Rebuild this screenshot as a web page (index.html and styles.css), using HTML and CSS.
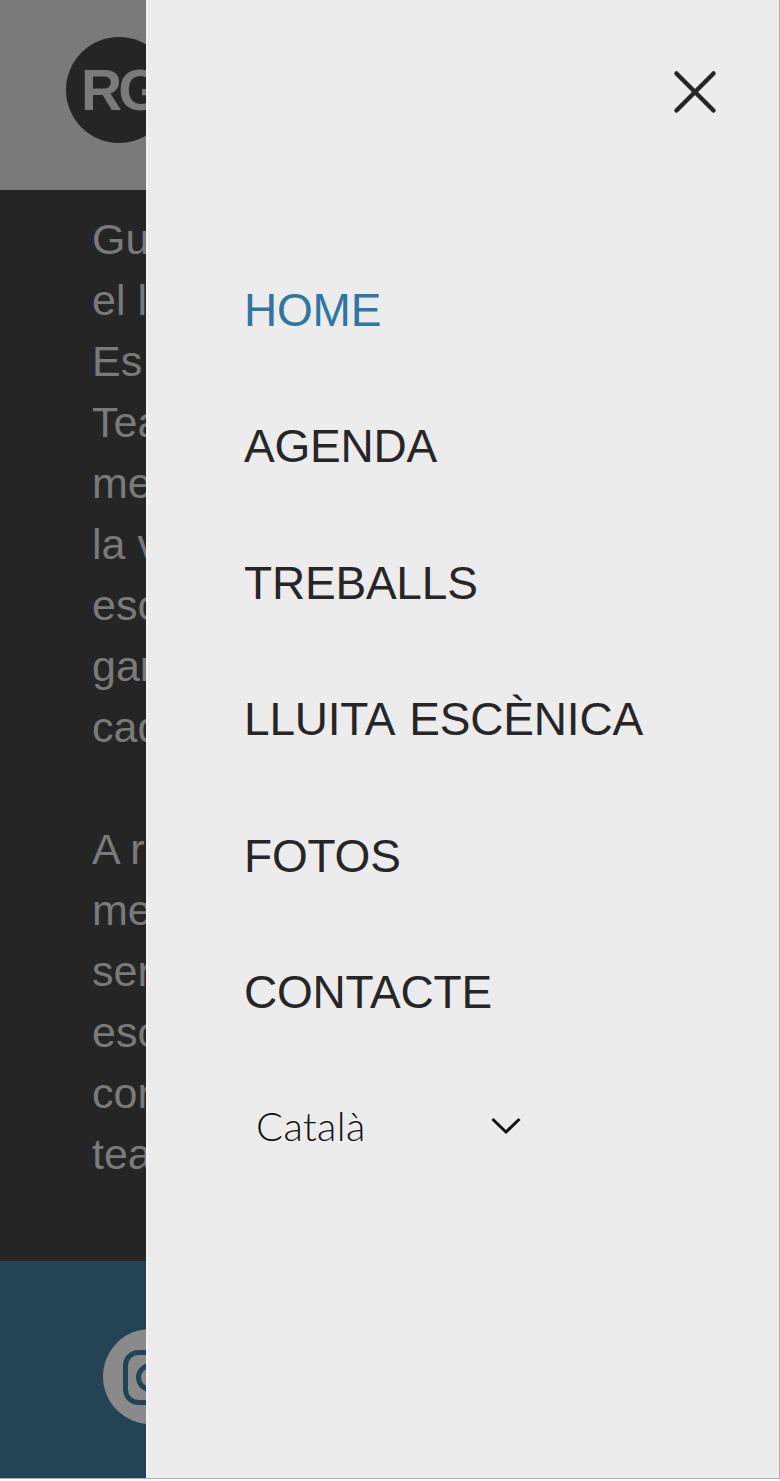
FILE: index.html
```html
<!DOCTYPE html>
<html lang="ca">
<head>
    <meta charset="UTF-8">
    <meta name="viewport" content="width=device-width, initial-scale=1.0">
    <title>Menu</title>
    <link rel="stylesheet" href="styles.css">
</head>
<body>

    <div class="page">
        <header class="top">
            <div class="logo">RG</div>
        </header>

        <main class="about">
            <p class="about-text">
                Gu<br>el l<br>Es<br>Tea<br>me<br>la v<br>esc<br>gar<br>cad
            </p>
            <p class="about-text">
                A r<br>me<br>ser<br>esc<br>cor<br>tea
            </p>
        </main>

        <footer class="bottom">
            <a class="social" href="#">
                <svg viewBox="0 0 95 95" width="95" height="95" fill="none" stroke="#234455" stroke-width="5">
                    <rect x="22.5" y="23.5" width="50" height="50" rx="13"/>
                    <circle cx="47.5" cy="48.5" r="12"/>
                </svg>
            </a>
        </footer>
        <div class="page-edge"></div>

        <aside class="panel">
            <div class="panel-head">
                <svg class="close" viewBox="0 0 44 44" width="44" height="44" stroke="#262626" stroke-width="4.5" stroke-linecap="round">
                    <line x1="3.5" y1="3.5" x2="40.5" y2="40.5"/>
                    <line x1="40.5" y1="3.5" x2="3.5" y2="40.5"/>
                </svg>
            </div>
            <nav class="menu">
                <a class="menu-item active" href="#">HOME</a>
                <a class="menu-item" href="#">AGENDA</a>
                <a class="menu-item" href="#">TREBALLS</a>
                <a class="menu-item" href="#">LLUITA ESCÈNICA</a>
                <a class="menu-item" href="#">FOTOS</a>
                <a class="menu-item" href="#">CONTACTE</a>
            </nav>
            <div class="lang">
                <span class="lang-name">Català</span>
                <svg viewBox="0 0 30 18" width="30" height="18" fill="none" stroke="#111" stroke-width="3">
                    <path d="M1.5 2 L15 15 L28.5 2"/>
                </svg>
            </div>
        </aside>
    </div>

</body>
</html>
```

FILE: styles.css
```css
html, body {
    margin: 0;
    padding: 0;
}
body {
    font-family: "Liberation Sans", Arial, sans-serif;
    background: #fff;
}
.page {
    position: relative;
    width: 780px;
    height: 1481px;
    overflow: hidden;
    display: flex;
    flex-direction: column;
}
.top {
    height: 190px;
    background: #7a7a7a;
    padding: 37px 0 0 66px;
    box-sizing: border-box;
}
.logo {
    width: 106px;
    height: 106px;
    border-radius: 50%;
    background: #252525;
    color: #7a7a7a;
    font-size: 57px;
    font-weight: bold;
    letter-spacing: -4px;
    line-height: 106px;
    padding-left: 15px;
    box-sizing: border-box;
}
.about {
    height: 1071px;
    background: #252525;
    padding: 19px 0 0 92px;
    box-sizing: border-box;
}
.about-text {
    margin: 0 0 61px;
    font-size: 43px;
    line-height: 61px;
    color: #7a7a7a;
}
.bottom {
    height: 217px;
    background: #234455;
    padding: 68px 0 0 103px;
    box-sizing: border-box;
}
.social {
    display: block;
    width: 95px;
    height: 95px;
    border-radius: 50%;
    background: #8a8a8a;
}
.social svg {
    display: block;
}
.page-edge {
    height: 1px;
    background: #a9b5bb;
}
.panel {
    position: absolute;
    top: 0;
    left: 146px;
    bottom: 3px;
    width: 634px;
    box-sizing: border-box;
    background: #ececec;
    border-left: 2px solid #f2f2f2;
    border-right: 1px solid #b4b4b4;
    display: flex;
    flex-direction: column;
}
.panel-head {
    display: flex;
    justify-content: flex-end;
    padding: 70px 62px 0 0;
}
.menu {
    display: flex;
    flex-direction: column;
    margin-top: 128px;
    padding-left: 96px;
}
.menu-item {
    height: 136.4px;
    line-height: 136.4px;
    font-size: 46px;
    letter-spacing: -0.2px;
    word-spacing: 4px;
    color: #262626;
    text-decoration: none;
}
.menu-item.active {
    color: #2f76a3;
}
.lang {
    display: flex;
    align-items: center;
    justify-content: space-between;
    width: 265px;
    margin: 36px 0 0 108px;
    height: 60px;
}
.lang-name {
    font-family: "Lato", sans-serif;
    font-weight: 300;
    font-size: 40px;
    letter-spacing: 0.4px;
    color: #111;
}
```
